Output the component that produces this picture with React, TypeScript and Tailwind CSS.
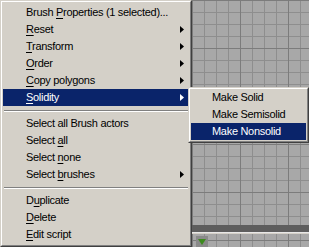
import React from "react";

type Item =
  | { kind: "sep" }
  | { kind: "item"; label: string; u?: number; sub?: boolean; active?: boolean };

const MAIN: Item[] = [
  { kind: "item", label: "Brush Properties (1 selected)...", u: 6 },
  { kind: "item", label: "Reset", u: 0, sub: true },
  { kind: "item", label: "Transform", u: 0, sub: true },
  { kind: "item", label: "Order", u: 0, sub: true },
  { kind: "item", label: "Copy polygons", u: 0, sub: true },
  { kind: "item", label: "Solidity", u: 0, sub: true, active: true },
  { kind: "sep" },
  { kind: "item", label: "Select all Brush actors" },
  { kind: "item", label: "Select all", u: 7 },
  { kind: "item", label: "Select none", u: 7 },
  { kind: "item", label: "Select brushes", u: 7, sub: true },
  { kind: "sep" },
  { kind: "item", label: "Duplicate", u: 1 },
  { kind: "item", label: "Delete", u: 0 },
  { kind: "item", label: "Edit script", u: 0 },
];

const SUB = [
  { label: "Make Solid" },
  { label: "Make Semisolid" },
  { label: "Make Nonsolid", active: true },
];

function Label({ text, u }: { text: string; u?: number }) {
  if (u === undefined) return <span>{text}</span>;
  return (
    <span>
      {text.slice(0, u)}
      <span className="underline underline-offset-[2px]">{text[u]}</span>
      {text.slice(u + 1)}
    </span>
  );
}

function Arrow() {
  return (
    <svg width="4" height="7" viewBox="0 0 4 7" className="fill-current">
      <path d="M0 0 L4 3.5 L0 7 Z" />
    </svg>
  );
}

function Grid() {
  return (
    <svg width="309" height="247" className="absolute inset-0">
      <defs>
        <pattern id="minor" width="12" height="12" patternUnits="userSpaceOnUse">
          <rect width="12" height="12" fill="#a8a8a8" />
          <rect x="0" y="0" width="12" height="1" fill="#8e8e8e" />
          <rect x="0" y="0" width="1" height="12" fill="#8e8e8e" />
        </pattern>
        <pattern id="major" width="48" height="48" patternUnits="userSpaceOnUse">
          <rect width="48" height="48" fill="url(#minor)" />
          <rect x="0" y="0" width="48" height="1" fill="#7c7c7c" />
          <rect x="0" y="0" width="1" height="48" fill="#7c7c7c" />
        </pattern>
      </defs>
      <rect width="309" height="247" fill="url(#major)" />
      <rect x="0" y="225" width="309" height="7" fill="#5e5e5e" />
      <rect x="0" y="232" width="309" height="1" fill="#e8e8e8" />
      <rect x="0" y="233" width="309" height="1" fill="#d4d0c8" />
      <rect x="196" y="236" width="12" height="11" fill="#8a8a8a" />
      <path d="M198 239 L206 239 L202 245 Z" fill="#3c8a1e" />
    </svg>
  );
}

export default function App() {
  return (
    <div
      className="relative w-[309px] h-[247px] overflow-hidden text-[11px] tracking-[-0.3px] text-black bg-[#a6a6a6]"
      style={{ fontFamily: '"Liberation Sans", Arial, sans-serif' }}
    >
      <Grid />

      <div className="absolute left-0 top-0 w-[192px] border border-t-[#d4d0c8] border-l-[#d4d0c8] border-r-[#404040] border-b-[#404040]">
        <div className="bg-[#d4d0c8] border border-t-white border-l-white border-r-[#808080] border-b-[#808080] py-[2px] px-px">
          {MAIN.map((it, i) =>
            it.kind === "sep" ? (
              <div key={i} className="h-[9px] flex flex-col justify-center px-px">
                <div className="h-px bg-[#808080]" />
                <div className="h-px bg-white" />
              </div>
            ) : (
              <div
                key={i}
                className={`h-[17px] flex items-center justify-between pl-[23px] pr-[5px] ${
                  it.active ? "bg-[#0a246a] text-white" : ""
                }`}
              >
                <Label text={it.label} u={it.u} />
                {it.sub && <Arrow />}
              </div>
            )
          )}
        </div>
      </div>

      <div className="absolute left-[188px] top-[87px] w-[121px] border border-t-[#d4d0c8] border-l-[#d4d0c8] border-r-[#404040] border-b-[#404040]">
        <div className="bg-[#d4d0c8] border border-t-white border-l-white border-r-[#808080] border-b-[#808080] pb-px px-px">
          {SUB.map((s) => (
            <div
              key={s.label}
              className={`h-[17px] flex items-center pl-[21px] ${s.active ? "bg-[#0a246a] text-white" : ""}`}
            >
              {s.label}
            </div>
          ))}
        </div>
      </div>
    </div>
  );
}
